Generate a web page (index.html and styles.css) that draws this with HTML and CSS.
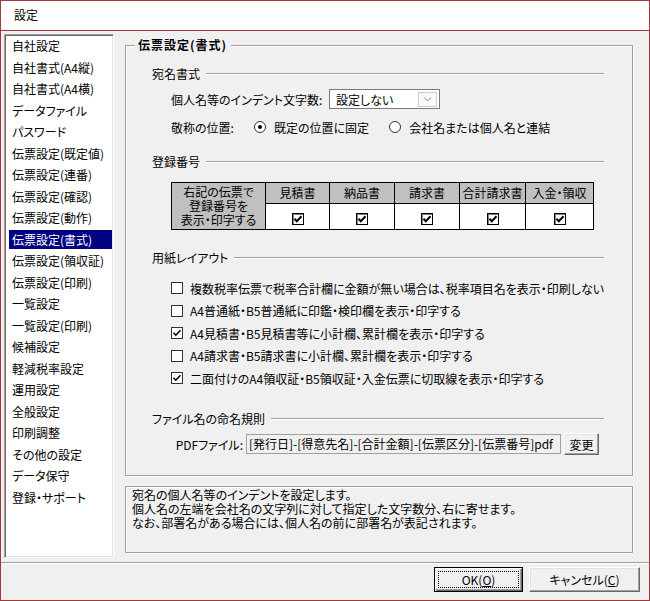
FILE: index.html
```html
<!DOCTYPE html>
<html lang="ja">

<head>
    <meta charset="UTF-8">
    <meta name="viewport" content="width=device-width, initial-scale=1.0">
    <title>設定</title>
    <link rel="stylesheet" href="styles.css">
</head>

<body>
    <div class="window">
        <div class="titlebar">設定</div>

        <div class="client">
            <div class="main">
                <ul class="menu">
                    <li>自社設定</li>
                    <li>自社書式(A4縦)</li>
                    <li>自社書式(A4横)</li>
                    <li>データファイル</li>
                    <li>パスワード</li>
                    <li>伝票設定(既定値)</li>
                    <li>伝票設定(連番)</li>
                    <li>伝票設定(確認)</li>
                    <li>伝票設定(動作)</li>
                    <li class="selected">伝票設定(書式)</li>
                    <li>伝票設定(領収証)</li>
                    <li>伝票設定(印刷)</li>
                    <li>一覧設定</li>
                    <li>一覧設定(印刷)</li>
                    <li>候補設定</li>
                    <li>軽減税率設定</li>
                    <li>運用設定</li>
                    <li>全般設定</li>
                    <li>印刷調整</li>
                    <li>その他の設定</li>
                    <li>データ保守</li>
                    <li>登録・サポート</li>
                </ul>

                <div class="panel">
                    <fieldset class="group">
                        <legend>伝票設定(書式)</legend>
                        <div class="group_body">

                            <div class="sub">宛名書式</div>
                            <div class="row row_select">
                                <span class="indent_label">個人名等のインデント文字数:</span>
                                <div class="select">
                                    <span class="select_text">設定しない</span>
                                    <span class="drop">
                                        <svg width="11" height="7" viewBox="0 0 11 7">
                                            <path d="M2 1.5 L5.5 5 L9 1.5" fill="none" stroke="#8a8a8a" stroke-width="1"/>
                                        </svg>
                                    </span>
                                </div>
                            </div>
                            <div class="row row_radio">
                                <span class="title_label">敬称の位置:</span>
                                <span class="radio checked"></span>
                                <span class="radio_label">既定の位置に固定</span>
                                <span class="radio second"></span>
                                <span class="radio_label">会社名または個人名と連結</span>
                            </div>

                            <div class="sub sub_reg">登録番号</div>
                            <table class="reg_table">
                                <tr class="reg_head">
                                    <th rowspan="2" class="reg_label">右記の伝票で<br>登録番号を<br>表示・印字する</th>
                                    <th class="c1">見積書</th>
                                    <th class="c2">納品書</th>
                                    <th class="c3">請求書</th>
                                    <th class="c4">合計請求書</th>
                                    <th class="c5">入金・領収</th>
                                </tr>
                                <tr class="reg_checks">
                                    <td><span class="tcb"><svg width="10" height="10" viewBox="0 0 10 10"><path d="M1.5 4.8 L3.8 7.2 L8.5 2.2" fill="none" stroke="#000" stroke-width="2"/></svg></span></td>
                                    <td><span class="tcb"><svg width="10" height="10" viewBox="0 0 10 10"><path d="M1.5 4.8 L3.8 7.2 L8.5 2.2" fill="none" stroke="#000" stroke-width="2"/></svg></span></td>
                                    <td><span class="tcb"><svg width="10" height="10" viewBox="0 0 10 10"><path d="M1.5 4.8 L3.8 7.2 L8.5 2.2" fill="none" stroke="#000" stroke-width="2"/></svg></span></td>
                                    <td><span class="tcb"><svg width="10" height="10" viewBox="0 0 10 10"><path d="M1.5 4.8 L3.8 7.2 L8.5 2.2" fill="none" stroke="#000" stroke-width="2"/></svg></span></td>
                                    <td><span class="tcb"><svg width="10" height="10" viewBox="0 0 10 10"><path d="M1.5 4.8 L3.8 7.2 L8.5 2.2" fill="none" stroke="#000" stroke-width="2"/></svg></span></td>
                                </tr>
                            </table>

                            <div class="sub sub_paper">用紙レイアウト</div>
                            <div class="checks">
                                <div class="check_row"><span class="cb"></span>複数税率伝票で税率合計欄に金額が無い場合は、税率項目名を表示・印刷しない</div>
                                <div class="check_row"><span class="cb"></span>A4普通紙・B5普通紙に印鑑・検印欄を表示・印字する</div>
                                <div class="check_row"><span class="cb"><svg width="10" height="10" viewBox="0 0 10 10"><path d="M1.5 4.8 L3.8 7.2 L8.5 2.2" fill="none" stroke="#000" stroke-width="1.6"/></svg></span>A4見積書・B5見積書等に小計欄、累計欄を表示・印字する</div>
                                <div class="check_row"><span class="cb"></span>A4請求書・B5請求書に小計欄、累計欄を表示・印字する</div>
                                <div class="check_row"><span class="cb"><svg width="10" height="10" viewBox="0 0 10 10"><path d="M1.5 4.8 L3.8 7.2 L8.5 2.2" fill="none" stroke="#000" stroke-width="1.6"/></svg></span>二面付けのA4領収証・B5領収証・入金伝票に切取線を表示・印字する</div>
                            </div>

                            <div class="sub sub_file">ファイル名の命名規則</div>
                            <div class="row row_pdf">
                                <span class="pdf_label">PDFファイル:</span>
                                <div class="pdf_box">[発行日]-[得意先名]-[合計金額]-[伝票区分]-[伝票番号]pdf</div>
                                <button class="btn btn_change">変更</button>
                            </div>

                        </div>
                    </fieldset>

                    <div class="desc">
                        宛名の個人名等のインデントを設定します。<br>
                        個人名の左端を会社名の文字列に対して指定した文字数分、右に寄せます。<br>
                        なお、部署名がある場合には、個人名の前に部署名が表記されます。
                    </div>
                </div>
            </div>

            <div class="footer">
                <button class="btn btn_ok"><span class="focus">OK(<u>O</u>)</span></button>
                <button class="btn btn_cancel">キャンセル(<u>C</u>)</button>
            </div>
        </div>
    </div>
</body>

</html>
```

FILE: styles.css
```css
* {
    box-sizing: border-box;
}

body {
    margin: 0;
    background-color: #ffffff;
    font-family: "Noto Sans CJK JP", "Noto Sans", sans-serif;
    font-size: 12px;
    font-feature-settings: "palt";
    color: #000000;
}

.window {
    width: 650px;
    height: 601px;
    border: 1px solid #a4373a;
    display: flex;
    flex-direction: column;
    overflow: hidden;
}

.titlebar {
    height: 30px;
    border-bottom: 1px solid #a4373a;
    background-color: #ffffff;
    padding-left: 13px;
    line-height: 28px;
    font-size: 12px;
}

.client {
    flex: 1;
    background-color: #f0f0f0;
    display: flex;
    flex-direction: column;
}

.main {
    display: flex;
    padding: 3px 0 4px 3px;
    height: 531px;
}

/* left menu */
.menu {
    list-style: none;
    margin: 0;
    padding: 1px 1px 0 4px;
    width: 110px;
    height: 524px;
    background-color: #ffffff;
    border: 1px solid;
    border-color: #a0a0a0 #ffffff #ffffff #a0a0a0;
    box-shadow: inset 1px 1px 0 #696969, inset -1px -1px 0 #e3e3e3;
}

.menu li {
    height: 19px;
    line-height: 19px;
    margin-bottom: 2.53px;
    padding-left: 3px;
    white-space: nowrap;
}

.menu li.selected {
    background-color: #000080;
    color: #ffffff;
}

/* right panel */
.panel {
    margin-left: 11px;
    width: 508px;
}

.group {
    margin: 3px 0 0 0;
    padding: 0;
    min-width: 0;
    border: 1px solid #a0a0a0;
    box-shadow: inset 1px 1px 0 #ffffff, 1px 1px 0 #ffffff;
}

.group legend {
    margin-left: 9px;
    padding: 0 4px 0 3px;
    line-height: 16px;
    font-weight: bold;
    letter-spacing: 1px;
    background-color: #f0f0f0;
}

.group_body {
    padding: 13px 28px 20px 26px;
}

.sub {
    display: flex;
    align-items: center;
    height: 16px;
    line-height: 16px;
    white-space: nowrap;
}

.sub::after {
    content: "";
    flex: 1;
    margin-left: 6px;
    border-top: 1px solid #a0a0a0;
    border-bottom: 1px solid #ffffff;
}

.sub_reg {
    margin-top: 19px;
}

.sub_paper {
    margin-top: 20px;
}

.sub_file {
    margin-top: 21px;
}

.row {
    display: flex;
    align-items: center;
    padding-left: 19px;
    white-space: nowrap;
}

.row_select {
    margin-top: 7px;
    height: 20px;
}

.indent_label {
    width: 155px;
}

.select {
    margin-left: 3px;
    width: 111px;
    height: 20px;
    border: 1px solid #7a7a7a;
    background-color: #ffffff;
    display: flex;
    align-items: center;
    padding: 0 2px 0 6px;
}

.select_text {
    flex: 1;
}

.drop {
    width: 19px;
    height: 15px;
    border: 1px solid #c5ced8;
    background-color: #f7f9fb;
    display: flex;
    align-items: center;
    justify-content: center;
}

.row_radio {
    margin-top: 10px;
    height: 16px;
}

.title_label {
    width: 83px;
}

.radio {
    width: 12px;
    height: 12px;
    border: 1px solid #333333;
    border-radius: 50%;
    background-color: #ffffff;
    display: flex;
    align-items: center;
    justify-content: center;
}

.radio.checked::after {
    content: "";
    width: 4px;
    height: 4px;
    border-radius: 50%;
    background-color: #000000;
}

.radio.second {
    margin-left: 20px;
}

.radio_label {
    margin-left: 8px;
}

/* registration table */
.reg_table {
    margin: 12px 0 0 19px;
    border-collapse: collapse;
    border: 1px solid #000000;
}

.reg_table th,
.reg_table td {
    border: 1px solid #000000;
    padding: 0;
    text-align: center;
    font-weight: normal;
    white-space: nowrap;
}

.reg_table th {
    background-color: #c0c0c0;
}

.reg_head th {
    height: 21px;
    line-height: 14px;
}

.reg_label {
    width: 94px;
    line-height: 14px !important;
}

.c1 {
    width: 64px;
}

.c2,
.c3 {
    width: 65px;
}

.c4 {
    width: 66px;
}

.c5 {
    width: 68px;
}

.reg_checks td {
    height: 26px;
    background-color: #ffffff;
}

.tcb {
    display: inline-flex;
    align-items: center;
    justify-content: center;
    width: 12px;
    height: 12px;
    vertical-align: middle;
    border: 1px solid #000000;
    box-shadow: inset 1px 1px 0 #808080;
    background-color: #ffffff;
}

/* paper layout */
.checks {
    margin-top: 11px;
    padding-left: 19px;
}

.check_row {
    display: flex;
    align-items: center;
    height: 22.5px;
    white-space: nowrap;
}

.cb {
    width: 12px;
    height: 12px;
    margin-right: 7px;
    border: 1px solid #333333;
    background-color: #ffffff;
    display: flex;
    align-items: center;
    justify-content: center;
}

/* file naming */
.row_pdf {
    margin-top: 7px;
    height: 21px;
}

.pdf_label {
    width: 72px;
    text-align: right;
}

.pdf_box {
    margin-left: 3px;
    width: 315px;
    height: 20px;
    line-height: 18px;
    padding-left: 2px;
    border: 1px solid #a0a0a0;
    background-color: #f0f0f0;
    overflow: hidden;
}

.btn {
    font-family: inherit;
    font-size: 12px;
    font-feature-settings: "palt";
    color: #000000;
    background-color: #f0f0f0;
    border: 1px solid;
    border-color: #ffffff #696969 #696969 #ffffff;
    box-shadow: inset -1px -1px 0 #a0a0a0, inset 1px 1px 0 #e3e3e3;
    padding: 0;
}

.btn_change {
    margin-left: 3px;
    width: 35px;
    height: 22px;
}

/* description */
.desc {
    margin-top: 10px;
    height: 67px;
    padding: 1px 6px;
    line-height: 14px;
    border: 1px solid #a0a0a0;
    box-shadow: inset 1px 1px 0 #ffffff, 1px 1px 0 #ffffff;
    white-space: nowrap;
}

/* footer buttons */
.footer {
    flex: 1;
    border-top: 1px solid #a0a0a0;
    box-shadow: inset 0 1px 0 #ffffff;
    display: flex;
    justify-content: flex-end;
    align-items: flex-start;
    padding: 4px 9px 0 0;
    gap: 6px;
}

.btn_ok {
    width: 89px;
    height: 25px;
    border: 1px solid #000000;
    box-shadow: inset 1px 1px 0 #ffffff, inset -1px -1px 0 #696969, inset -2px -2px 0 #a0a0a0;
    display: flex;
    padding: 3px;
}

.focus {
    flex: 1;
    border: 1px dotted #000000;
    display: flex;
    align-items: center;
    justify-content: center;
}

.btn_cancel {
    width: 111px;
    height: 25px;
}
```
